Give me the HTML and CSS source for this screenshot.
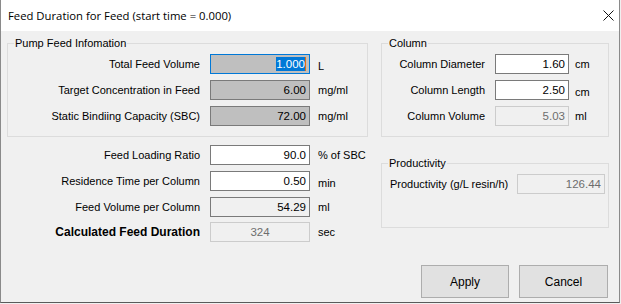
FILE: index.html
```html
<!DOCTYPE html>
<html lang="en">
<head>
    <meta charset="UTF-8">
    <title>Feed Duration for Feed</title>
    <link rel="stylesheet" href="styles.css">
</head>
<body>
    <div class="window">
        <div class="titlebar">
            <span class="title">Feed Duration for Feed (start time = 0.000)</span>
            <svg class="close" width="11" height="11" viewBox="0 0 11 11">
                <path d="M0.5 0.5 L10.5 10.5 M10.5 0.5 L0.5 10.5" stroke="#111" stroke-width="1" fill="none"/>
            </svg>
        </div>

        <div class="client">
            <div class="left">
                <fieldset class="group pump">
                    <legend>Pump Feed Infomation</legend>
                    <div class="row">
                        <span class="label">Total Feed Volume</span>
                        <div class="box readonly focused"><span class="selected">1.000</span><span class="caret"></span></div>
                        <span class="unit low">L</span>
                    </div>
                    <div class="row">
                        <span class="label">Target Concentration in Feed</span>
                        <div class="box readonly">6.00</div>
                        <span class="unit">mg/ml</span>
                    </div>
                    <div class="row">
                        <span class="label">Static Bindiing Capacity (SBC)</span>
                        <div class="box readonly">72.00</div>
                        <span class="unit">mg/ml</span>
                    </div>
                </fieldset>

                <div class="feed-rows">
                    <div class="row">
                        <span class="label">Feed Loading Ratio</span>
                        <div class="box">90.0</div>
                        <span class="unit">% of SBC</span>
                    </div>
                    <div class="row">
                        <span class="label">Residence Time per Column</span>
                        <div class="box">0.50</div>
                        <span class="unit low">min</span>
                    </div>
                    <div class="row">
                        <span class="label">Feed Volume per Column</span>
                        <div class="box plain">54.29</div>
                        <span class="unit">ml</span>
                    </div>
                    <div class="row last">
                        <span class="label bold">Calculated Feed Duration</span>
                        <div class="box disabled center">324</div>
                        <span class="unit">sec</span>
                    </div>
                </div>
            </div>

            <div class="right">
                <fieldset class="group column">
                    <legend>Column</legend>
                    <div class="row">
                        <span class="label">Column Diameter</span>
                        <div class="box">1.60</div>
                        <span class="unit">cm</span>
                    </div>
                    <div class="row">
                        <span class="label">Column Length</span>
                        <div class="box">2.50</div>
                        <span class="unit low">cm</span>
                    </div>
                    <div class="row">
                        <span class="label">Column Volume</span>
                        <div class="box disabled">5.03</div>
                        <span class="unit">ml</span>
                    </div>
                </fieldset>

                <fieldset class="group productivity">
                    <legend>Productivity</legend>
                    <div class="row">
                        <span class="label">Productivity (g/L resin/h)</span>
                        <div class="box disabled">126.44</div>
                    </div>
                </fieldset>

                <div class="buttons">
                    <button class="btn apply">Apply</button>
                    <button class="btn cancel">Cancel</button>
                </div>
            </div>
        </div>
    </div>
</body>
</html>
```

FILE: styles.css
```css
body {
    margin: 0;
    background-color: #f0f0f0;
    font-family: "Liberation Sans", Arial, sans-serif;
    font-size: 11px;
    color: #000;
    overflow: hidden;
}

.window {
    width: 620px;
    height: 303px;
    box-sizing: border-box;
    border-left: 1px solid #8a8a8a;
    border-right: 1px solid #8a8a8a;
    border-bottom: 1px solid #5a5a5a;
    background-color: #f0f0f0;
}

.titlebar {
    height: 31px;
    background-color: #fff;
    display: flex;
    align-items: center;
    justify-content: space-between;
    padding: 0 5px 0 7px;
}

.title {
    font-family: "Open Sans", "Noto Sans", sans-serif;
    font-size: 11.3px;
    color: #000;
    margin-top: -1px;
}

.close {
    display: block;
    margin-top: -1px;
}

.client {
    display: flex;
    gap: 13px;
    padding: 6px 0 0 6px;
}

.left {
    width: 361px;
}

.right {
    width: 228px;
}

/* group boxes */

.group {
    margin: 0;
    padding: 4px 0 10px 0;
    border: 1px solid #dcdcdc;
    min-width: 0;
}

.group legend {
    font-size: 11px;
    line-height: 13px;
    padding: 0 1px;
    margin-left: 6px;
}

.row {
    display: flex;
    align-items: center;
    height: 20px;
}

.group .row + .row,
.feed-rows .row + .row {
    margin-top: 6px;
}

.label {
    text-align: right;
    white-space: nowrap;
}

.bold {
    font-weight: bold;
    font-size: 12px;
}

.pump .label {
    width: 192px;
    margin-right: 10px;
}

.feed-rows {
    margin-top: 8px;
}

.feed-rows .label {
    width: 193px;
    margin-right: 10px;
}

.feed-rows .row.last {
    margin-top: 5px;
}

.unit {
    margin-left: 8px;
}

.unit.low {
    position: relative;
    top: 2px;
}

/* text boxes */

.box {
    width: 100px;
    height: 20px;
    box-sizing: border-box;
    border: 1px solid #7a7a7a;
    background-color: #fff;
    padding: 0 3px;
    line-height: 18px;
    font-size: 11.5px;
    display: flex;
    justify-content: flex-end;
    align-items: center;
}

.box.readonly {
    background-color: #bfbfbf;
}

.box.plain {
    background-color: #f0f0f0;
}

.box.disabled {
    background-color: #f0f0f0;
    border-color: #cccccc;
    color: #6d6d6d;
}

.box.center {
    justify-content: center;
}

.box.focused {
    border-color: #0078d7;
}

.selected {
    background-color: #0078d7;
    color: #fff;
    line-height: 14px;
}

.caret {
    width: 1px;
    height: 14px;
    background-color: #e07010;
}

.column .label {
    width: 103px;
    margin-right: 10px;
}

.column .box {
    width: 74px;
}

.column .unit {
    margin-left: 6px;
}

.productivity {
    margin-top: 20px;
    padding: 4px 0 33px 0;
}

.productivity .label {
    text-align: left;
    width: 127px;
    margin-left: 8px;
}

.productivity .box {
    width: 88px;
}

/* buttons */

.buttons {
    display: flex;
    gap: 10px;
    margin-top: 37px;
    padding-left: 40px;
}

.btn {
    width: 88px;
    height: 33px;
    background-color: #e1e1e1;
    border: 1px solid #adadad;
    font-family: "Liberation Sans", Arial, sans-serif;
    font-size: 12px;
    color: #000;
    padding: 0;
}

.btn.cancel {
    width: 89px;
}
```
